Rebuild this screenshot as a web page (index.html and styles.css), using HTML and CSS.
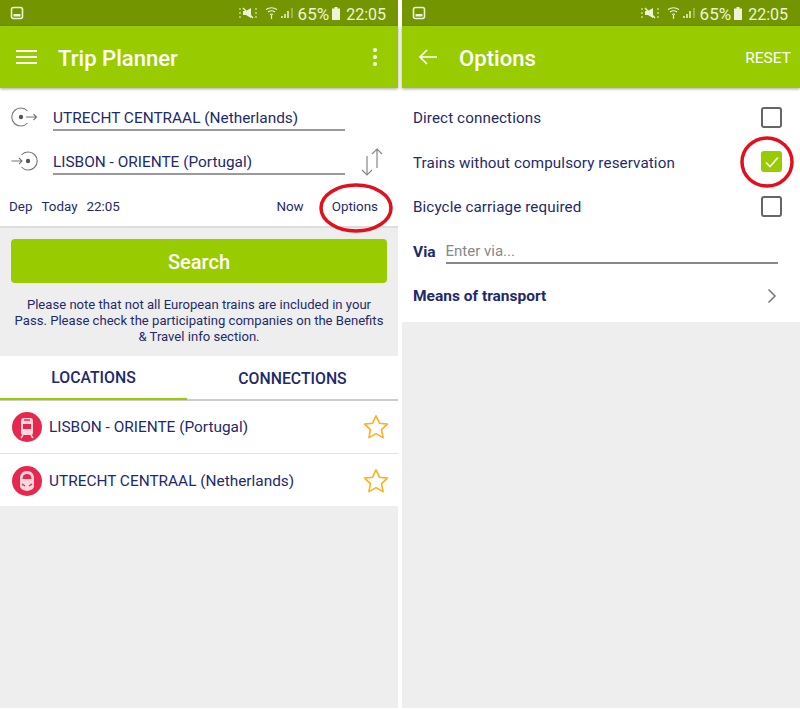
FILE: index.html
```html
<!DOCTYPE html>
<html lang="en">
<head>
    <meta charset="UTF-8">
    <meta name="viewport" content="width=device-width, initial-scale=1.0">
    <title>Trip Planner</title>
    <link rel="stylesheet" href="styles.css">
</head>
<body>
    <div class="screens">
        <!-- Trip planner -->
        <section class="phone">
            <div class="status-bar">
                <svg class="status-pic" width="14" height="14" viewBox="0 0 14 14"><rect x="1.500" y="1.500" width="11" height="11" rx="2" fill="none" stroke="#eef3d8" stroke-width="1.600"/><rect x="3.500" y="8" width="7" height="2.500" fill="#eef3d8"/></svg>
                <div class="status-right">
                    <svg width="20" height="12" viewBox="0 0 20 12"><path d="M1 2h2M1 6h2M1 10h2M17 2h2M17 6h2M17 10h2" stroke="#eef3d8" stroke-width="1"/><path d="M5 4h3l5-3v10L8 8H5z" fill="#eef3d8"/><path d="M5 1l10 10" stroke="#eef3d8" stroke-width="1.500"/></svg>
                    <svg class="status-wifi" width="13" height="14" viewBox="0 0 13 14"><path d="M1 3.500q5.500-3.500 11 0M3 6q3.500-2.500 7 0M5 8.500q1.500-1 3 0" fill="none" stroke="#eef3d8" stroke-width="1.200"/><path d="M6.500 9v4" stroke="#eef3d8" stroke-width="1.200"/></svg>
                    <svg class="status-signal" width="14" height="12" viewBox="0 0 14 12"><path d="M1 11v-2M4 11V7M7 11V4" stroke="#eef3d8" stroke-width="1.500"/><path d="M11 11V1" stroke="#b9cc80" stroke-width="1.200"/></svg>
                    <span class="status-text status-pct">65%</span>
                    <svg class="status-batt" width="8" height="13" viewBox="0 0 8 13"><path d="M2.500 0h3v1.500H8V13H0V1.500h2.500z" fill="#eef3d8"/></svg>
                    <span class="status-text status-time">22:05</span>
                </div>
            </div>
            <header class="toolbar">
                <div class="menu-icon"><span></span><span></span><span></span></div>
                <h1>Trip Planner</h1>
                <div class="more-icon"><span></span><span></span><span></span></div>
            </header>
            <div class="route-form">
                <div class="route-row">
                    <svg class="route-icon" width="28" height="20" viewBox="0 0 28 20"><path d="M17.500 4A9 9 0 1 0 17.500 16" fill="none" stroke="#777" stroke-width="1.100"/><circle cx="11" cy="10" r="2.200" fill="#555"/><path d="M16 10h10.500M23.500 7l3 3-3 3" fill="none" stroke="#777" stroke-width="1.100"/></svg>
                    <div class="route-field">UTRECHT CENTRAAL (Netherlands)</div>
                </div>
                <div class="route-row route-row-to">
                    <svg class="route-icon" width="28" height="20" viewBox="0 0 28 20"><path d="M11.500 4A9 9 0 1 1 11.500 16" fill="none" stroke="#777" stroke-width="1.100"/><circle cx="18" cy="10" r="2.200" fill="#555"/><path d="M1.500 10h10.500M9 7l3 3-3 3" fill="none" stroke="#777" stroke-width="1.100"/></svg>
                    <div class="route-field">LISBON - ORIENTE (Portugal)</div>
                    <svg class="swap-icon" width="28" height="28" viewBox="0 0 28 28"><path d="M9 8v19M4 22l5 5 5-5M19 1v19M14 6l5-5 5 5" fill="none" stroke="#888" stroke-width="1.200"/></svg>
                </div>
                <div class="time-row">
                    <span class="time-dep">Dep</span>
                    <span class="time-today">Today</span>
                    <span>22:05</span>
                    <span class="time-now">Now</span>
                    <span class="time-options">Options</span>
                </div>
            </div>
            <div class="search-area">
                <button class="search-btn">Search</button>
                <p class="pass-note">Please note that not all European trains are included in your Pass. Please check the participating companies on the Benefits &amp; Travel info section.</p>
            </div>
            <div class="tabs">
                <div class="tab tab-active">LOCATIONS</div>
                <div class="tab">CONNECTIONS</div>
            </div>
            <div class="list-row">
                <svg class="train-icon" width="30" height="30" viewBox="0 0 30 30"><circle cx="15" cy="15" r="15" fill="#e8274f"/><path d="M9 9q0-3 3-3h6q3 0 3 3v12q0 2-2 2H11q-2 0-2-2z" fill="#fbd7de"/><path d="M11 12h8v5h-8z" fill="#e8274f"/><path d="M12 8h6" stroke="#e8274f" stroke-width="1.500"/><path d="M11 23l-2 3M19 23l2 3" stroke="#fbd7de" stroke-width="1.500"/></svg>
                <span class="list-name">LISBON - ORIENTE (Portugal)</span>
                <svg class="star-icon" width="26" height="26" viewBox="0 0 26 26"><path d="M13 1.800l3.400 7.400 8 .9-5.900 5.500 1.600 8L13 19.600l-7.100 4 1.600-8L1.600 10.100l8-.9z" fill="none" stroke="#fbb124" stroke-width="1.600" stroke-linejoin="round"/></svg>
            </div>
            <div class="list-row list-row-last">
                <svg class="train-icon" width="30" height="30" viewBox="0 0 30 30"><circle cx="15" cy="15" r="15" fill="#e8274f"/><path d="M8 13q0-8 7-8t7 8v7q0 4-7 5-7-1-7-5z" fill="#fbd7de"/><path d="M10.500 13q0-5 4.500-5t4.500 5z" fill="#e8274f"/><path d="M10 18l3 2M20 18l-3 2" stroke="#e8274f" stroke-width="1.500"/></svg>
                <span class="list-name">UTRECHT CENTRAAL (Netherlands)</span>
                <svg class="star-icon" width="26" height="26" viewBox="0 0 26 26"><path d="M13 1.800l3.400 7.400 8 .9-5.900 5.500 1.600 8L13 19.600l-7.100 4 1.600-8L1.600 10.100l8-.9z" fill="none" stroke="#fbb124" stroke-width="1.600" stroke-linejoin="round"/></svg>
            </div>
            <svg class="circle-mark circle-options" width="74" height="50" viewBox="0 0 74 50"><ellipse cx="37" cy="25" rx="35" ry="23" fill="none" stroke="#e2101c" stroke-width="3.500"/></svg>
        </section>

        <!-- Options -->
        <section class="phone">
            <div class="status-bar">
                <svg class="status-pic" width="14" height="14" viewBox="0 0 14 14"><rect x="1.500" y="1.500" width="11" height="11" rx="2" fill="none" stroke="#eef3d8" stroke-width="1.600"/><rect x="3.500" y="8" width="7" height="2.500" fill="#eef3d8"/></svg>
                <div class="status-right">
                    <svg width="20" height="12" viewBox="0 0 20 12"><path d="M1 2h2M1 6h2M1 10h2M17 2h2M17 6h2M17 10h2" stroke="#eef3d8" stroke-width="1"/><path d="M5 4h3l5-3v10L8 8H5z" fill="#eef3d8"/><path d="M5 1l10 10" stroke="#eef3d8" stroke-width="1.500"/></svg>
                    <svg class="status-wifi" width="13" height="14" viewBox="0 0 13 14"><path d="M1 3.500q5.500-3.500 11 0M3 6q3.500-2.500 7 0M5 8.500q1.500-1 3 0" fill="none" stroke="#eef3d8" stroke-width="1.200"/><path d="M6.500 9v4" stroke="#eef3d8" stroke-width="1.200"/></svg>
                    <svg class="status-signal" width="14" height="12" viewBox="0 0 14 12"><path d="M1 11v-2M4 11V7M7 11V4" stroke="#eef3d8" stroke-width="1.500"/><path d="M11 11V1" stroke="#b9cc80" stroke-width="1.200"/></svg>
                    <span class="status-text status-pct">65%</span>
                    <svg class="status-batt" width="8" height="13" viewBox="0 0 8 13"><path d="M2.500 0h3v1.500H8V13H0V1.500h2.500z" fill="#eef3d8"/></svg>
                    <span class="status-text status-time">22:05</span>
                </div>
            </div>
            <header class="toolbar">
                <svg class="back-icon" width="20" height="18" viewBox="0 0 20 18"><path d="M19 9H2M9 2L2 9l7 7" fill="none" stroke="#fff" stroke-width="1.700"/></svg>
                <h1 class="options-title">Options</h1>
                <span class="reset-btn">RESET</span>
            </header>
            <div class="options-list">
                <div class="option-row">
                    <span>Direct connections</span>
                    <span class="checkbox"></span>
                </div>
                <div class="option-row">
                    <span>Trains without compulsory reservation</span>
                    <span class="checkbox checkbox-on">
                        <svg width="20" height="20" viewBox="0 0 20 20"><path d="M4 10.500l4 4 8-9" fill="none" stroke="#fff" stroke-width="1.600"/></svg>
                    </span>
                </div>
                <div class="option-row">
                    <span>Bicycle carriage required</span>
                    <span class="checkbox"></span>
                </div>
                <div class="via-row">
                    <span class="via-label">Via</span>
                    <div class="via-input">Enter via...</div>
                </div>
                <div class="means-row">
                    <span>Means of transport</span>
                    <svg width="10" height="16" viewBox="0 0 10 16"><path d="M1.500 1.500L8 8l-6.500 6.500" fill="none" stroke="#777" stroke-width="1.500"/></svg>
                </div>
            </div>
            <svg class="circle-mark circle-check" width="54" height="52" viewBox="0 0 54 52"><ellipse cx="27" cy="26" rx="25" ry="24" fill="none" stroke="#e2101c" stroke-width="3.500"/></svg>
        </section>
    </div>
</body>
</html>
```

FILE: styles.css
```css
* { margin: 0; padding: 0; box-sizing: border-box; }
body { background: #fff; font-family: Roboto, 'Liberation Sans', sans-serif; color: #1f2a6b; }
.screens { display: grid; grid-template-columns: 398px 398px; gap: 4px; width: 800px; height: 710px; overflow: hidden; }
.phone { position: relative; height: 708px; background: #eeeeee; }

/* top bars */
.status-bar { height: 26px; background: #739600; display: flex; align-items: center; justify-content: space-between; padding: 0 12px 0 10px; color: #eef3d8; }
.status-right { display: flex; align-items: center; }
.status-wifi { margin-left: 7px; }
.status-signal { margin-left: 3px; }
.status-text { font-size: 16px; margin-left: 4px; padding-top: 2px; }
.status-pct { font-size: 17px; margin-left: 3px; }
.status-batt { margin-left: 3px; }
.status-time { margin-left: 6px; }
.toolbar { height: 62px; background: #99cc00; display: flex; align-items: center; color: #fff; padding: 2px 16px 0; box-shadow: 0 1px 3px rgba(0,0,0,0.35); position: relative; }
.toolbar h1 { font-size: 22.100px; font-weight: 500; margin-left: 21px; flex: 1; }
.menu-icon { width: 21px; display: flex; flex-direction: column; gap: 4px; margin-bottom: 2px; }
.menu-icon span { height: 2px; background: #fff; }
.more-icon { display: flex; flex-direction: column; gap: 3px; margin-right: 5px; margin-bottom: 2px; }
.more-icon span { width: 4px; height: 4px; border-radius: 50%; background: #fff; }
.back-icon { margin-bottom: 2px; }
.toolbar .options-title { margin-left: 21px; }
.reset-btn { font-size: 15.500px; font-weight: 400; margin-right: -7px; }

/* route form */
.route-form { background: #fff; height: 140px; border-bottom: 2px solid #ddd; padding: 12px 12px 0 10px; }
.route-row { display: flex; align-items: flex-start; height: 44px; }
.route-icon { margin-top: 7px; flex: none; }
.route-field { flex: none; width: 292px; height: 31px; margin-left: 15px; border-bottom: 2px solid #9a9a9a; font-size: 15.400px; line-height: 36px; white-space: nowrap; }
.swap-icon { flex: none; margin-left: 13px; margin-top: 4px; }
.time-row { display: flex; font-size: 13.400px; margin-top: 3px; height: 30px; align-items: center; }
.time-dep { margin-right: 9px; margin-left: -1px; }
.time-today { margin-right: 9px; }
.time-now { margin-left: auto; margin-right: 28px; }
.time-options { margin-right: 8px; }

/* search */
.search-area { padding: 11px 11px 11px; }
.search-btn { width: 376px; height: 44px; background: #99cc00; border: none; border-radius: 4px; color: #fff; font-family: inherit; font-size: 20px; font-weight: 500; display: block; padding-top: 2px; }
.pass-note { font-size: 13.100px; line-height: 16px; text-align: center; margin-top: 14px; }

/* tabs + list */
.tabs { display: grid; grid-template-columns: 187px 1fr; height: 45px; background: #fff; border-bottom: 2px solid #ccc; }
.tab { height: 44px; font-size: 15.800px; font-weight: 500; display: flex; align-items: center; justify-content: center; }
.tab-active { border-bottom: 2px solid #99cc00; }
.list-row { height: 53px; background: #fff; border-bottom: 1px solid #e2e2e2; display: flex; align-items: center; padding: 0 9px 0 12px; }
.list-row-last { height: 52px; border-bottom: none; padding-top: 2px; }
.train-icon { flex: none; }
.list-name { font-size: 15.400px; margin-left: 7px; flex: 1; white-space: nowrap; }

/* options screen */
.options-list { background: #fff; height: 234px; padding-top: 7px; }
.option-row { height: 44.500px; display: flex; align-items: center; justify-content: space-between; padding: 0 18px 0 11px; font-size: 15.200px; letter-spacing: 0.100px; }
.option-row span:first-child { padding-top: 2px; }
.checkbox { width: 21px; height: 21px; border: 2px solid #666; border-radius: 3px; display: block; }
.checkbox-on { background: #99cc00; border: none; }
.checkbox-on svg { display: block; margin: 0.500px; }
.via-row { display: flex; align-items: flex-start; padding: 0 22px 0 11px; height: 42px; margin-top: 2px; }
.via-label { font-size: 15.500px; font-weight: 700; line-height: 42px; }
.via-input { flex: 1; margin-left: 10px; height: 33px; border-bottom: 2px solid #888; font-size: 15px; line-height: 41px; color: #888; white-space: nowrap; }
.means-row { display: flex; align-items: center; justify-content: space-between; padding: 0 23px 0 11px; font-size: 15.500px; font-weight: 700; height: 46px; }

/* red hand drawn marks */
.circle-mark { position: absolute; pointer-events: none; }
.circle-options { left: 319px; top: 183px; }
.circle-check { left: 338px; top: 136px; }
```
